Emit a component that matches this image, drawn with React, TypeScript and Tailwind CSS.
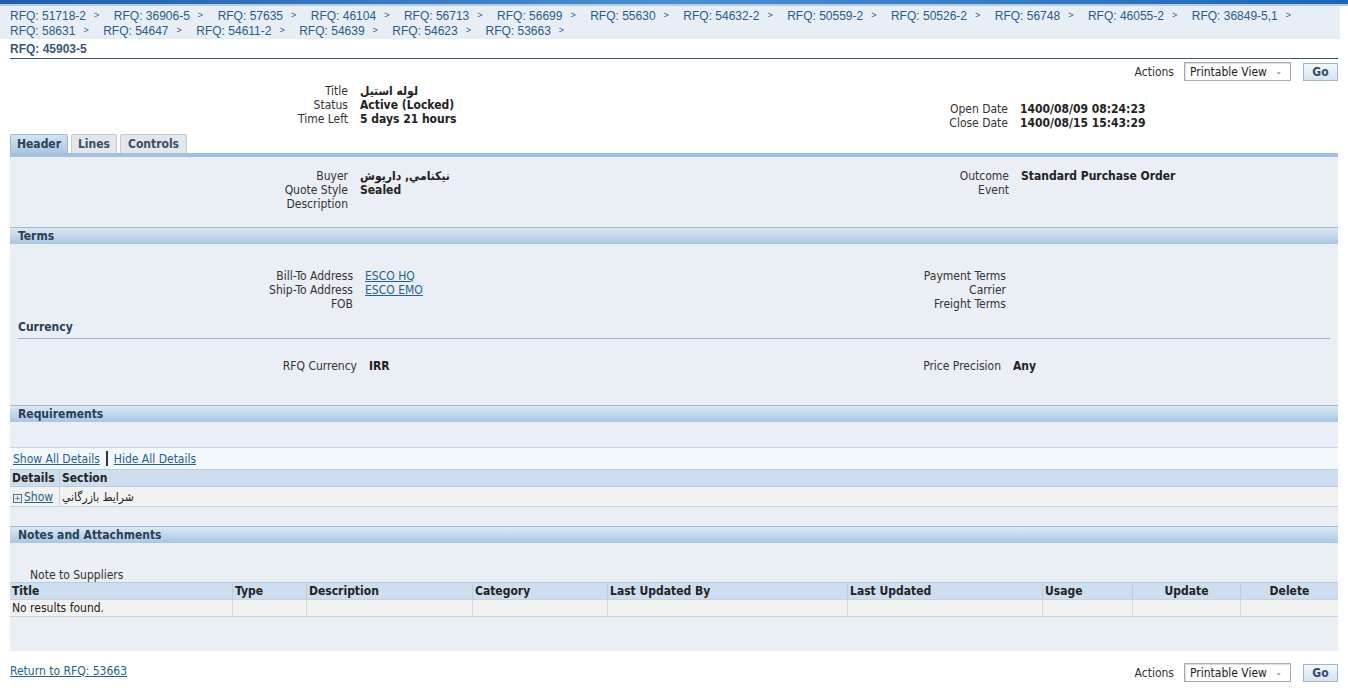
import { Fragment } from 'react';

const crumbs1 = [
  '51718-2', '36906-5', '57635', '46104', '56713', '56699', '55630', '54632-2',
  '50559-2', '50526-2', '56748', '46055-2', '36849-5,1'
];
const crumbs2 = ['58631', '54647', '54611-2', '54639', '54623', '53663'];

const tahoma = "font-['DejaVu_Sans_Condensed','DejaVu_Sans',sans-serif]";

function Crumbs({ items }: { items: string[] }) {
  return (
    <div className="flex h-[15px] items-center">
      {items.map(c => (
        <span key={c} className="mr-[14.5px] flex items-center text-[12px] text-[#2b5b86]">
          RFQ: {c}
          <span className="ml-[8px] text-[9px] text-[#2b5b86]">&gt;</span>
        </span>
      ))}
    </div>
  );
}

function Actions() {
  return (
    <div className={`flex items-center justify-end text-[12px] text-[#333] ${tahoma}`}>
      <span className="mr-[10px]">Actions</span>
      <div className="flex h-[19px] w-[107px] items-center justify-between border border-[#a9a9a9] bg-white pl-[5px] pr-[8px] text-[12px] text-[#222] shadow-[inset_1px_1px_0_#ddd]">
        <span>Printable View</span>
        <span className="text-[9px] text-[#666]">&#8964;</span>
      </div>
      <div className="ml-[12px] flex h-[18px] w-[35px] items-center justify-center border border-[#9fb5cb] bg-gradient-to-b from-[#f4f8fc] to-[#d6e3f0] text-[12px] font-bold text-[#2e4d6b]">
        Go
      </div>
    </div>
  );
}

function Field({ label, value, w, bold = true }: { label: string; value?: React.ReactNode; w: string; bold?: boolean }) {
  return (
    <div className="flex h-[14px] items-center leading-[14px]">
      <span className={`${w} shrink-0 text-right text-[#333]`}>{label}</span>
      <span className={`ml-[12px] ${bold ? 'font-bold text-[#222]' : ''}`}>{value}</span>
    </div>
  );
}

function Bar({ title }: { title: string }) {
  return (
    <div className="flex h-[17px] items-center border-t border-[#9db9d6] bg-gradient-to-b from-[#dde8f3] to-[#a9c6e3] pl-[8px] text-[12px] font-bold text-[#2a3f56]">
      {title}
    </div>
  );
}

function Link({ children }: { children: React.ReactNode }) {
  return <span className="text-[#23628f] underline">{children}</span>;
}

const noteCols = [
  { t: 'Title', w: 'w-[222px]' },
  { t: 'Type', w: 'w-[73px]' },
  { t: 'Description', w: 'w-[165px]' },
  { t: 'Category', w: 'w-[134px]' },
  { t: 'Last Updated By', w: 'w-[239px]' },
  { t: 'Last Updated', w: 'w-[194px]' },
  { t: 'Usage', w: 'w-[89px]' },
  { t: 'Update', w: 'w-[107px]', c: true },
  { t: 'Delete', w: 'flex-1', c: true }
];

export default function App() {
  return (
    <div className="min-h-[692px] bg-white">
      {/* top stripe */}
      <div className="h-[4px] bg-gradient-to-r from-[#1f5ea8] via-[#4b8fd0] to-[#1b67b3]" />
      <div className="h-[2px] bg-[#b3cbe5]" />

      {/* breadcrumbs */}
      <div className="mr-[8px] bg-[#e8eef5] pb-[1px] pl-[10px] pt-[2px] font-['Liberation_Sans',Arial,sans-serif]">
        <Crumbs items={crumbs1} />
        <Crumbs items={crumbs2} />
      </div>

      <div className="px-[10px]">
        {/* page title */}
        <div className="mt-[3px] border-b border-[#3b5670] pb-[2px] font-['Liberation_Sans',Arial,sans-serif] text-[12px] font-bold leading-[14px] text-[#3a5877]">
          RFQ: 45903-5
        </div>

        <div className="mt-[3px]">
          <Actions />
        </div>

        {/* summary */}
        <div className={`mt-[3px] flex text-[12px] ${tahoma}`}>
          <div className="w-[659px]">
            <Field label="Title" value="لوله استیل" w="w-[338px]" />
            <Field label="Status" value="Active (Locked)" w="w-[338px]" />
            <Field label="Time Left" value="5 days 21 hours" w="w-[338px]" />
          </div>
          <div className="pt-[18px]">
            <Field label="Open Date" value="1400/08/09 08:24:23" w="w-[339px]" />
            <Field label="Close Date" value="1400/08/15 15:43:29" w="w-[339px]" />
          </div>
        </div>

        {/* tabs */}
        <div className={`mt-[4px] flex items-end text-[12px] font-bold ${tahoma}`}>
          <div className="flex h-[19px] w-[58px] items-center justify-center rounded-t-[2px] border border-b-0 border-[#9db9d6] bg-gradient-to-b from-[#d5e4f2] to-[#aac6e2] text-[#2d4054]">
            Header
          </div>
          <div className="ml-[3px] flex h-[19px] w-[46px] items-center justify-center rounded-t-[2px] border border-b-0 border-[#c3cbd3] bg-[#e3e7eb] text-[#3b4f63]">
            Lines
          </div>
          <div className="ml-[3px] flex h-[19px] w-[67px] items-center justify-center rounded-t-[2px] border border-b-0 border-[#c3cbd3] bg-[#e3e7eb] text-[#3b4f63]">
            Controls
          </div>
        </div>
        <div className="h-[4px] bg-[#a3c1df]" />

        {/* panel */}
        <div className={`bg-[#eaeef5] pb-[34px] text-[12px] text-[#222] ${tahoma}`}>
          <div className="flex pt-[12px]">
            <div className="w-[659px]">
              <Field label="Buyer" value="نيكنامي, داريوش" w="w-[338px]" />
              <Field label="Quote Style" value="Sealed" w="w-[338px]" />
              <Field label="Description" w="w-[338px]" />
            </div>
            <div>
              <Field label="Outcome" value="Standard Purchase Order" w="w-[340px]" />
              <Field label="Event" w="w-[340px]" />
            </div>
          </div>

          <div className="mt-[16px]">
            <Bar title="Terms" />
          </div>
          <div className="flex pt-[25px]">
            <div className="w-[659px]">
              <Field label="Bill-To Address" value={<Link>ESCO HQ</Link>} w="w-[343px]" bold={false} />
              <Field label="Ship-To Address" value={<Link>ESCO EMO</Link>} w="w-[343px]" bold={false} />
              <Field label="FOB" w="w-[343px]" />
            </div>
            <div>
              <Field label="Payment Terms" w="w-[337px]" />
              <Field label="Carrier" w="w-[337px]" />
              <Field label="Freight Terms" w="w-[337px]" />
            </div>
          </div>

          <div className="mx-[8px] mt-[7px] border-b border-[#9fb3c6] pb-[2px] font-bold text-[#2a3f56]">
            Currency
          </div>
          <div className="flex pt-[20px]">
            <div className="w-[659px]">
              <Field label="RFQ Currency" value="IRR" w="w-[347px]" />
            </div>
            <div>
              <Field label="Price Precision" value="Any" w="w-[332px]" />
            </div>
          </div>

          <div className="mt-[32px]">
            <Bar title="Requirements" />
          </div>
          <div className="mt-[25px]">
            <div className="flex h-[22px] items-center border-t border-[#c8d7e6] bg-[#f3f8fd] pl-[3px]">
              <Link>Show All Details</Link>
              <span className="mx-[6px] h-[15px] w-[2px] bg-[#333]" />
              <Link>Hide All Details</Link>
            </div>
            <div className="flex h-[18px] items-center border-y border-[#b9cde0] bg-[#cfdeee] font-bold text-[#222]">
              <div className="w-[49px] pl-[2px]">Details</div>
              <div className="h-full w-px bg-[#b9cde0]" />
              <div className="pl-[2px]">Section</div>
            </div>
            <div className="flex h-[20px] items-center border-b border-[#c9d0d7] bg-[#f2f2f2]">
              <div className="flex w-[49px] items-center pl-[3px]">
                <span className="mt-[4px] flex h-[9px] w-[9px] items-center justify-center border border-[#54708c] text-[9px] leading-none text-[#54708c]">
                  +
                </span>
                <span className="ml-[2px]"><Link>Show</Link></span>
              </div>
              <div className="h-full w-px bg-[#cfd5db]" />
              <div className="pl-[2px]">شرايط بازرگاني</div>
            </div>
          </div>

          <div className="mt-[19px]">
            <Bar title="Notes and Attachments" />
          </div>
          <div className="mt-[25px] pl-[20px] leading-[14px] text-[#333]">Note to Suppliers</div>
          <div>
            <div className="flex h-[17px] items-center border-t border-[#b9cde0] bg-[#cfdeee] font-bold text-[#222]">
              {noteCols.map((c, i) => (
                <Fragment key={c.t}>
                  {i > 0 && <div className="h-full w-px bg-[#b9cde0]" />}
                  <div className={`${c.w} ${c.c ? 'text-center' : 'pl-[2px]'}`}>{c.t}</div>
                </Fragment>
              ))}
            </div>
            <div className="flex h-[18px] items-center border-y border-[#c9d0d7] bg-[#f2f2f2] text-[#222]">
              {noteCols.map((c, i) => (
                <Fragment key={c.t}>
                  {i > 0 && <div className="h-full w-px bg-[#d3d8dd]" />}
                  <div className={`${c.w} pl-[2px]`}>{i === 0 ? 'No results found.' : ''}</div>
                </Fragment>
              ))}
            </div>
          </div>
        </div>

        {/* footer */}
        <div className={`mt-[12px] flex items-center justify-between text-[12px] ${tahoma}`}>
          <span className="mt-[-4px]"><Link>Return to RFQ: 53663</Link></span>
          <Actions />
        </div>
      </div>
    </div>
  );
}
